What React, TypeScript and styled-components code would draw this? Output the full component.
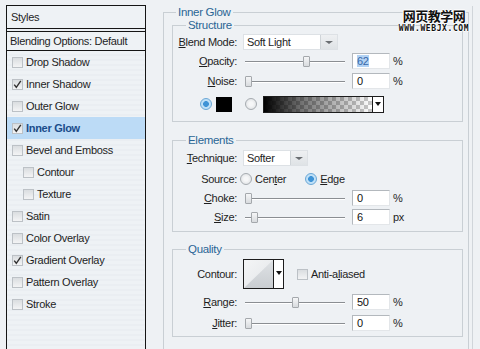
import React from "react";
import styled, { createGlobalStyle } from "styled-components";

const GlobalStyle = createGlobalStyle`
  html, body {
    margin: 0;
    padding: 0;
    overflow: hidden;
  }
  body {
    background: #eef1f4;
    font-family: "Liberation Sans", Arial, sans-serif;
    font-size: 11px;
    letter-spacing: -0.3px;
    color: #1e1e1e;
  }
`;

const styleItems = [
    {name: "Drop Shadow", checked: false},
    {name: "Inner Shadow", checked: true},
    {name: "Outer Glow", checked: false},
    {name: "Inner Glow", checked: true, selected: true},
    {name: "Bevel and Emboss", checked: false},
    {name: "Contour", checked: false, indent: true},
    {name: "Texture", checked: false, indent: true},
    {name: "Satin", checked: false},
    {name: "Color Overlay", checked: false},
    {name: "Gradient Overlay", checked: true},
    {name: "Pattern Overlay", checked: false},
    {name: "Stroke", checked: false},
];

const CheckMark = () => (
    <svg width="11" height="11" viewBox="0 0 11 11">
        <path d="M2.2 5.6 L4.3 8.3 L8.8 1.8" fill="none" stroke="#333" strokeWidth="1.4"/>
    </svg>
);

const Slider = ({value}: { value: number }) => (
    <SliderTrack>
        <Thumb style={{left: Math.round(value * 0.93)}}/>
    </SliderTrack>
);

const App = () => {
    return (
        <>
            <GlobalStyle/>
            <Page>
                <StylesPanel>
                    <PanelHeader>Styles</PanelHeader>
                    <BlendingRow>Blending Options: Default</BlendingRow>
                    {styleItems.map(item => (
                        <StyleItem key={item.name} $indent={!!item.indent} $selected={!!item.selected}>
                            <CheckBox>{item.checked && <CheckMark/>}</CheckBox>
                            <ItemName>{item.name}</ItemName>
                        </StyleItem>
                    ))}
                </StylesPanel>

                <RightColumn>
                    <OuterGroup>
                        <Legend $left={4} $lh={12}>Inner Glow</Legend>

                        <SubGroup $top={0} $bottom={4}>
                            <Legend $left={13} $lh={14}>Structure</Legend>
                            <Row $h={18}>
                                <Label><Key>B</Key>lend Mode:</Label>
                                <Select $w={95}>
                                    Soft Light
                                    <SelectButton><Arrow/></SelectButton>
                                </Select>
                            </Row>
                            <Row $h={20}>
                                <Label><Key>O</Key>pacity:</Label>
                                <Slider value={62}/>
                                <NumberInput><Selected>62</Selected></NumberInput>
                                <Unit>%</Unit>
                            </Row>
                            <Row $h={20}>
                                <Label><Key>N</Key>oise:</Label>
                                <Slider value={0}/>
                                <NumberInput>0</NumberInput>
                                <Unit>%</Unit>
                            </Row>
                            <ColorRow>
                                <Radio $on/>
                                <Swatch/>
                                <Radio $gap={13}/>
                                <GradientBox>
                                    <GradientFill/>
                                    <GradientArrow><Arrow $dark/></GradientArrow>
                                </GradientBox>
                            </ColorRow>
                        </SubGroup>

                        <SubGroup $top={11} $bottom={3}>
                            <Legend $left={13} $lh={14}>Elements</Legend>
                            <Row $h={20}>
                                <Label><Key>T</Key>echnique:</Label>
                                <Select $w={65}>
                                    Softer
                                    <SelectButton><Arrow/></SelectButton>
                                </Select>
                            </Row>
                            <Row $h={22}>
                                <Label>Source:</Label>
                                <Radio $gap={3}/>
                                <RadioText>Cen<Key>t</Key>er</RadioText>
                                <Radio $on $gap={19}/>
                                <RadioText><Key>E</Key>dge</RadioText>
                            </Row>
                            <Row $h={16}>
                                <Label><Key>C</Key>hoke:</Label>
                                <Slider value={0}/>
                                <NumberInput>0</NumberInput>
                                <Unit>%</Unit>
                            </Row>
                            <Row $h={22}>
                                <Label><Key>S</Key>ize:</Label>
                                <Slider value={6}/>
                                <NumberInput>6</NumberInput>
                                <Unit>px</Unit>
                            </Row>
                        </SubGroup>

                        <SubGroup $top={10} $bottom={3}>
                            <Legend $left={13} $lh={14}>Quality</Legend>
                            <Row $h={34}>
                                <Label>Contour:</Label>
                                <ContourBox>
                                    <svg width="41" height="30" viewBox="0 0 41 30">
                                        <defs>
                                            <linearGradient id="cg" x1="0" y1="0" x2="1" y2="1">
                                                <stop offset="0" stopColor="#f4f5f6"/>
                                                <stop offset="1" stopColor="#e2e5e8"/>
                                            </linearGradient>
                                            <linearGradient id="cg2" x1="0" y1="0" x2="0" y2="1">
                                                <stop offset="0" stopColor="#dfe2e5"/>
                                                <stop offset="1" stopColor="#c9cdd1"/>
                                            </linearGradient>
                                        </defs>
                                        <rect x="0" y="0" width="41" height="30" fill="#fff"/>
                                        <rect x="1" y="1" width="29" height="28" fill="url(#cg)"/>
                                        <polygon points="1,29 30,1 30,29" fill="url(#cg2)"/>
                                        <line x1="30.5" y1="0" x2="30.5" y2="30" stroke="#1c1c1c"/>
                                        <polygon points="33,12 39,12 36,16" fill="#111"/>
                                        <rect x="0.5" y="0.5" width="40" height="29" fill="none" stroke="#1c1c1c"/>
                                    </svg>
                                </ContourBox>
                                <SmallCheck $gap={13}/>
                                <RadioText>Anti-a<Key>l</Key>iased</RadioText>
                            </Row>
                            <Row $h={22}>
                                <Label><Key>R</Key>ange:</Label>
                                <Slider value={50}/>
                                <NumberInput>50</NumberInput>
                                <Unit>%</Unit>
                            </Row>
                            <Row $h={20}>
                                <Label><Key>J</Key>itter:</Label>
                                <Slider value={0}/>
                                <NumberInput>0</NumberInput>
                                <Unit>%</Unit>
                            </Row>
                        </SubGroup>
                    </OuterGroup>
                </RightColumn>

                <Watermark>
                    <WatermarkTitle>网页教学网</WatermarkTitle>
                    <WatermarkUrl>WWW.WEBJX.COM</WatermarkUrl>
                </Watermark>
            </Page>
        </>
    )
}

const Page = styled.div`
  position: relative;
  display: flex;
  align-items: flex-start;
  padding: 5px 0 0 6px;
  height: 349px;
  box-sizing: border-box;
`;

const StylesPanel = styled.div`
  flex-shrink: 0;
  width: 140px;
  height: 360px;
  box-sizing: border-box;
  margin-right: 17px;
  border: 1px solid #151515;
  background: repeating-linear-gradient(to bottom, #eef2f5 0, #eef2f5 3px, #eaeef2 3px, #eaeef2 5px);
`;

const PanelHeader = styled.div`
  height: 22px;
  display: flex;
  align-items: center;
  padding-left: 4px;
  border-bottom: 1px solid #151515;
  background: #eef2f5;
`;

const BlendingRow = styled.div`
  height: 18px;
  display: flex;
  align-items: center;
  padding-left: 3px;
  margin-top: 2px;
  border-top: 1px solid #151515;
  border-bottom: 1px solid #151515;
  background: #eef2f5;
`;

const StyleItem = styled.div<{ $indent: boolean; $selected: boolean }>`
  height: 22px;
  display: flex;
  align-items: center;
  padding-left: ${p => p.$indent ? 16 : 5}px;
  background: ${p => p.$selected ? "#bcdbf6" : "transparent"};
  color: ${p => p.$selected ? "#1a4c8a" : "#1e1e1e"};
  font-weight: ${p => p.$selected ? "bold" : "normal"};
`;

const CheckBox = styled.span`
  width: 11px;
  height: 11px;
  box-sizing: border-box;
  border: 1px solid #bcc1c6;
  background: linear-gradient(#dadde0, #f3f4f5);
  display: flex;
  align-items: center;
  justify-content: center;
  flex-shrink: 0;
  svg {
    flex-shrink: 0;
  }
`;

const SmallCheck = styled(CheckBox)<{ $gap: number }>`
  margin-left: ${p => p.$gap}px;
`;

const ItemName = styled.span`
  margin-left: 3px;
  white-space: nowrap;
`;

const RightColumn = styled.div`
  margin-top: 1px;
  padding-right: 3px;
  height: 360px;
  border-right: 1px solid #d0d5da;
`;

const OuterGroup = styled.fieldset`
  margin: 0;
  padding: 0 5px 0 8px;
  width: 306px;
  min-height: 360px;
  box-sizing: border-box;
  border: 1px solid #c9cfd4;
  min-inline-size: auto;
`;

const SubGroup = styled.fieldset<{ $top: number; $bottom: number }>`
  margin: ${p => p.$top}px 0 0;
  padding: 1px 0 ${p => p.$bottom}px 0;
  border: 1px solid #c9cfd4;
  min-inline-size: auto;
`;

const Legend = styled.legend<{ $left: number; $lh: number }>`
  margin-left: ${p => p.$left}px;
  padding: 0 2px;
  font-size: 11.5px;
  line-height: ${p => p.$lh}px;
  color: #2a6595;
`;

const Row = styled.div<{ $h: number }>`
  display: flex;
  align-items: center;
  height: ${p => p.$h}px;
`;

const Label = styled.span`
  width: 64px;
  flex-shrink: 0;
  text-align: right;
  white-space: nowrap;
`;

const Key = styled.span`
  text-decoration: underline;
`;

const Select = styled.div<{ $w: number }>`
  margin-left: 6px;
  width: ${p => p.$w}px;
  height: 16px;
  box-sizing: border-box;
  padding-left: 3px;
  display: flex;
  align-items: center;
  justify-content: space-between;
  background: #fff;
  border: 1px solid #dde1e5;
`;

const SelectButton = styled.span`
  width: 16px;
  align-self: stretch;
  display: flex;
  align-items: center;
  justify-content: center;
  background: linear-gradient(#eef0f2, #dfe3e6);
  border-left: 1px solid #cfd4d8;
`;

const Arrow = styled.span<{ $dark?: boolean }>`
  width: 0;
  height: 0;
  border-left: ${p => p.$dark ? 3 : 4}px solid transparent;
  border-right: ${p => p.$dark ? 3 : 4}px solid transparent;
  border-top: ${p => p.$dark ? "4px solid #111" : "3px solid #6a6e72"};
`;

const SliderTrack = styled.div`
  position: relative;
  margin-left: 8px;
  width: 100px;
  height: 16px;
  flex-shrink: 0;
  background: linear-gradient(#8a8e92, #8a8e92) 0 8px / 100% 1px no-repeat,
  linear-gradient(#fff, #fff) 0 9px / 100% 1px no-repeat;
`;

const Thumb = styled.span`
  position: absolute;
  top: 3px;
  width: 7px;
  height: 11px;
  box-sizing: border-box;
  border: 1px solid #a4a8ac;
  border-radius: 1px;
  background: linear-gradient(#f5f6f7, #d8dbde);
`;

const NumberInput = styled.div`
  margin-left: 7px;
  width: 38px;
  height: 16px;
  box-sizing: border-box;
  padding-left: 4px;
  display: flex;
  align-items: center;
  background: #fff;
  border: 1px solid;
  border-color: #b3b8bd #e3e6e9 #e3e6e9 #b3b8bd;
  color: #111;
`;

const Selected = styled.span`
  background: #b2d2f3;
  color: #3868a8;
`;

const Unit = styled.span`
  margin-left: 3px;
`;

const ColorRow = styled.div`
  display: flex;
  align-items: center;
  height: 26px;
  padding-left: 27px;
`;

const Radio = styled.span<{ $on?: boolean; $gap?: number }>`
  margin-left: ${p => p.$gap || 0}px;
  width: 12px;
  height: 12px;
  flex-shrink: 0;
  box-sizing: border-box;
  border-radius: 50%;
  border: 1px solid ${p => p.$on ? "#6aa7d6" : "#a6abb0"};
  background: ${p => p.$on
    ? "radial-gradient(circle, #3f93d6 0 2.6px, #bfe0f7 3.2px 100%)"
    : "radial-gradient(circle, #f6f7f8 0 2px, #d8dbde 100%)"};
`;

const RadioText = styled.span`
  margin-left: 3px;
  white-space: nowrap;
`;

const Swatch = styled.span`
  margin-left: 4px;
  width: 16px;
  height: 15px;
  background: #000;
`;

const GradientBox = styled.div`
  margin-left: 6px;
  width: 121px;
  height: 17px;
  box-sizing: border-box;
  display: flex;
  border: 1px solid #1d1d1d;
`;

const GradientFill = styled.span`
  flex: 1;
  background: linear-gradient(to right, #000 0%, rgba(0, 0, 0, 0.55) 35%, rgba(0, 0, 0, 0) 100%),
  repeating-conic-gradient(#c9c9c9 0 25%, #fff 0 50%) 0 0 / 8px 8px;
`;

const GradientArrow = styled.span`
  width: 10px;
  display: flex;
  align-items: center;
  justify-content: center;
  background: #fff;
  border-left: 1px solid #1d1d1d;
`;

const ContourBox = styled.div`
  margin-left: 6px;
  width: 41px;
  height: 30px;
  svg {
    display: block;
  }
`;

const Watermark = styled.div`
  position: absolute;
  left: 398px;
  top: 8px;
  width: 72px;
  display: flex;
  flex-direction: column;
  align-items: center;
  letter-spacing: 0;
`;

const WatermarkTitle = styled.span`
  font-family: "Noto Sans CJK SC", sans-serif;
  font-size: 13px;
  line-height: 16px;
  font-weight: bold;
  letter-spacing: -0.5px;
  color: #111;
  text-shadow: 1px 0 #fff, -1px 0 #fff, 0 1px #fff, 0 -1px #fff;
`;

const WatermarkUrl = styled.span`
  font-family: "DejaVu Sans Mono", monospace;
  font-size: 8px;
  line-height: 9px;
  font-weight: bold;
  letter-spacing: 0.6px;
  color: #111;
  text-shadow: 1px 0 #fff, 0 1px #fff;
`;

export default App;
